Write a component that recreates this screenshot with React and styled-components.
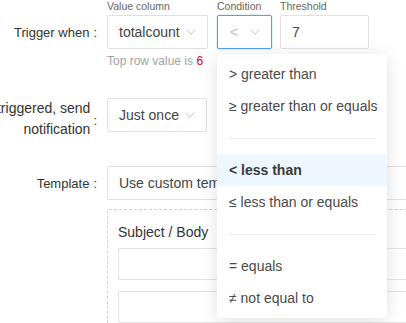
import React from "react";
import styled, { createGlobalStyle, css } from "styled-components";

const Global = createGlobalStyle`
  html, body { margin: 0; padding: 0; background: #fff; overflow: hidden; }
  body { font-family: "Liberation Sans", Arial, sans-serif; color: #333; }
  * { box-sizing: border-box; }
`;

const Form = styled.div`
  width: 406px;
  height: 323px;
  overflow: hidden;
  position: relative;
`;

const Row = styled.div`
  display: grid;
  grid-template-columns: 107px auto;
  align-items: start;
  margin-top: ${(p) => p.$mt || 0}px;
`;

const Label = styled.div`
  display: flex;
  align-items: center;
  justify-content: flex-end;
  font-size: ${(p) => (p.$tall ? 14 : 13)}px;
  color: #333;
  white-space: nowrap;
  height: ${(p) => (p.$tall ? 42 : 34)}px;
  margin-top: ${(p) => p.$offset || 0}px;
  line-height: 21px;
  text-align: right;
`;

const Colon = styled.span`
  font-size: 13px;
  margin: 0 10px 0 4px;
  ${(p) =>
    p.$low &&
    css`
      margin: 3px 10px 0 3px;
    `}
`;

const Controls = styled.div`
  display: flex;
  gap: 9px;
`;

const Field = styled.div`
  width: ${(p) => p.$w}px;
  margin-left: ${(p) => p.$shift || 0}px;
  position: relative;
  flex: none;
`;

const FieldLabel = styled.div`
  font-size: 10.5px;
  line-height: 12px;
  color: #666;
  margin-bottom: 3px;
  white-space: nowrap;
`;

const Box = styled.div`
  height: 34px;
  border: 1px solid ${(p) => (p.$focus ? "#4ea1f3" : "#e0e0e0")};
  ${(p) =>
    p.$focus &&
    css`
      box-shadow: 0 0 0 1px rgba(78, 161, 243, 0.15);
    `}
  border-radius: 2px;
  display: flex;
  align-items: center;
  justify-content: space-between;
  padding: 0 11px 0 ${(p) => (p.$focus ? 12 : 11)}px;
  font-size: 14px;
  color: ${(p) => (p.$placeholder ? "#bdbdbd" : "#444")};
  background: #fff;
  white-space: nowrap;
  overflow: hidden;
  width: ${(p) => (p.$w ? `${p.$w}px` : "100%")};
`;

const Helper = styled.div`
  margin-top: 4px;
  font-size: 12px;
  line-height: 16px;
  color: #a3a3a3;
  white-space: nowrap;
`;

const Red = styled.span`
  color: #d0021b;
`;

const Menu = styled.div`
  position: absolute;
  top: 54px;
  left: 0;
  width: 170px;
  background: #fff;
  border-radius: 4px;
  box-shadow: 0 3px 18px rgba(0, 0, 0, 0.13);
  padding: 4px 0;
  z-index: 10;
`;

const Item = styled.div`
  height: 32px;
  display: flex;
  align-items: center;
  padding: 0 12px;
  font-size: 14px;
  color: #4a4a4a;
  white-space: nowrap;
  ${(p) =>
    p.$active &&
    css`
      background: #edf7fd;
      font-weight: bold;
      color: #3a3a3a;
    `}
`;

const Divider = styled.div`
  height: 32px;
  display: flex;
  align-items: center;
  padding: 0 12px;
  &::after {
    content: "";
    display: block;
    width: 100%;
    height: 1px;
    background: #ebebeb;
  }
`;

const Dashed = styled.div`
  width: 330px;
  border: 1px dashed #cfcfcf;
  border-radius: 2px;
  padding: 12px 10px 20px;
`;

const SectionTitle = styled.div`
  font-size: 14px;
  line-height: 20px;
  color: #333;
  margin-bottom: 6px;
`;

const TextInput = styled.div`
  height: 32px;
  border: 1px solid #e3e3e3;
  border-radius: 2px;
  margin-bottom: 11px;
`;

const Chevron = () => (
  <svg width="10" height="6" viewBox="0 0 10 6" fill="none">
    <polyline points="0.5,0.5 5,5.3 9.5,0.5" stroke="#c2c2c2" strokeWidth="1" />
  </svg>
);

export default function App() {
  return (
    <Form>
      <Global />
      <Row>
        <Label $offset={15}>
          Trigger when<Colon>:</Colon>
        </Label>
        <Controls>
          <Field $w={101}>
            <FieldLabel>Value column</FieldLabel>
            <Box>
              totalcount
              <Chevron />
            </Box>
            <Helper>
              Top row value is <Red>6</Red>
            </Helper>
          </Field>
          <Field $w={55}>
            <FieldLabel>Condition</FieldLabel>
            <Box $focus $placeholder>
              &lt;
              <Chevron />
            </Box>
            <Menu>
              <Item>&gt; greater than</Item>
              <Item>≥ greater than or equals</Item>
              <Divider />
              <Item $active>&lt; less than</Item>
              <Item>≤ less than or equals</Item>
              <Divider />
              <Item>= equals</Item>
              <Item>≠ not equal to</Item>
            </Menu>
          </Field>
          <Field $w={89} $shift={-1}>
            <FieldLabel>Threshold</FieldLabel>
            <Box>7</Box>
          </Field>
        </Controls>
      </Row>
      <Row $mt={29}>
        <Label $tall>
          <span>
            When triggered, send
            <br />
            notification
          </span>
          <Colon $low>:</Colon>
        </Label>
        <Box $w={100}>
          Just once
          <Chevron />
        </Box>
      </Row>
      <Row $mt={26}>
        <Label>
          Template<Colon>:</Colon>
        </Label>
        <Box $w={330}>Use custom template</Box>
      </Row>
      <Row $mt={9}>
        <div />
        <Dashed>
          <SectionTitle>Subject / Body</SectionTitle>
          <TextInput />
          <TextInput />
        </Dashed>
      </Row>
    </Form>
  );
}
